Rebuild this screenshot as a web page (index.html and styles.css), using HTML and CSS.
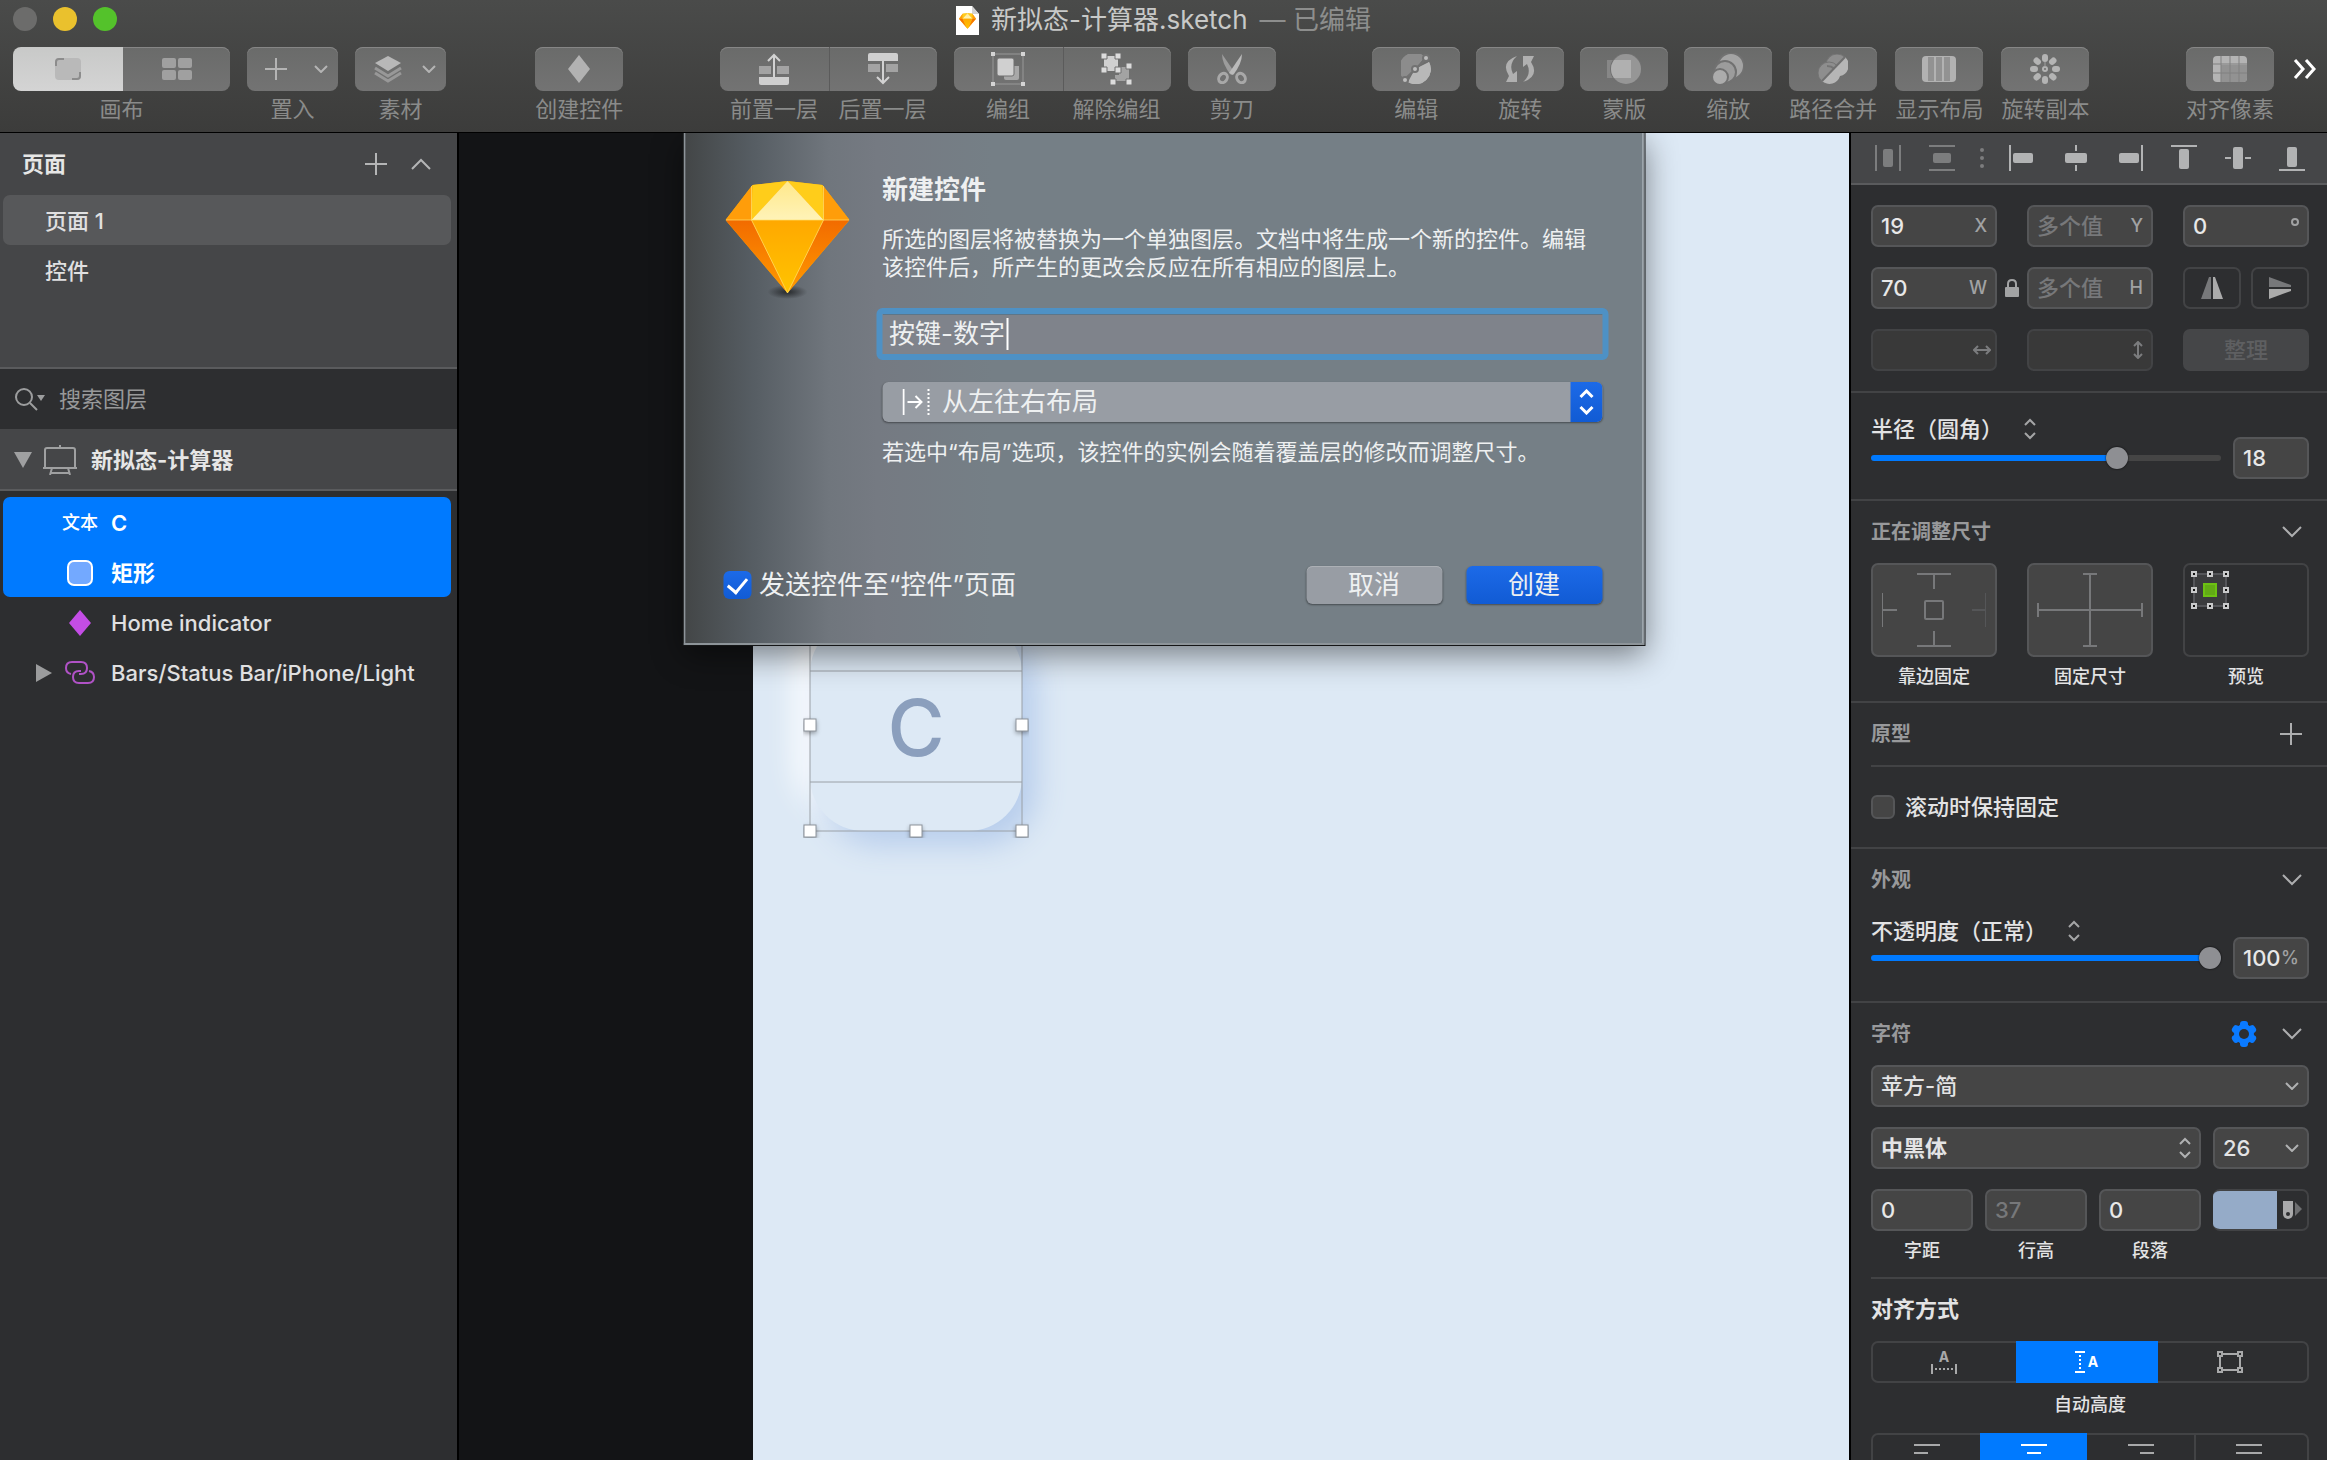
FILE: index.html
```html
<!DOCTYPE html>
<html lang="zh-CN">
<head>
<meta charset="utf-8">
<title>新拟态-计算器.sketch</title>
<link rel="stylesheet" href="styles.css">
</head>
<body>
<svg width="0" height="0" class="defs" aria-hidden="true">
  <defs>
    <linearGradient id="gemTop" x1="0" y1="0" x2="0" y2="1"><stop offset="0" stop-color="#ffe88a"/><stop offset="1" stop-color="#fff3b8"/></linearGradient>
    <linearGradient id="gemMid" x1="0" y1="0" x2="0" y2="1"><stop offset="0" stop-color="#ffa800"/><stop offset="1" stop-color="#ffc400"/></linearGradient>
    <linearGradient id="gemSide" x1="0" y1="0" x2="0" y2="1"><stop offset="0" stop-color="#f26b00"/><stop offset="1" stop-color="#ff9a00"/></linearGradient>
    <symbol id="gem" viewBox="0 0 124 112">
      <path d="M27 4 62 0 97 4 124 39 62 112 0 39Z" fill="#fdad00"/>
      <path d="M27 4 0 39H26Z" fill="#ff9d0a"/><path d="M97 4 124 39H98Z" fill="#ff9d0a"/>
      <path d="M27 4 62 0 26 39Z" fill="#ffcd1a"/><path d="M97 4 62 0 98 39Z" fill="#ffcd1a"/>
      <path d="M62 0 98 39H26Z" fill="url(#gemTop)"/>
      <path d="M0 39H26L62 112Z" fill="url(#gemSide)"/><path d="M124 39H98L62 112Z" fill="url(#gemSide)"/>
      <path d="M26 39H98L62 112Z" fill="url(#gemMid)"/>
      <path d="M0 39H124M26 5V39M98 5V39M26 39 62 112 98 39" fill="none" stroke="#ffe36e" stroke-width="1" opacity=".7"/>
    </symbol>
    <symbol id="down" viewBox="0 0 20 12"><path d="M1 1 10 10 19 1" fill="none" stroke="currentColor" stroke-width="2"/></symbol>
    <symbol id="tipdown" viewBox="0 0 14 8"><path d="M1 1 7 7 13 1" fill="none" stroke="currentColor" stroke-width="2"/></symbol>
    <symbol id="updown" viewBox="0 0 12 22"><path d="M1 7 6 2 11 7M1 15 6 20 11 15" fill="none" stroke="currentColor" stroke-width="2"/></symbol>
    <symbol id="plus" viewBox="0 0 22 22"><path d="M11 0V22M0 11H22" stroke="currentColor" stroke-width="2"/></symbol>
  </defs>
</svg>

<div class="app">
  <header class="titlebar">
    <div class="title-row">
      <div class="lights"><button class="light off" aria-label="关闭"></button><button class="light min" aria-label="最小化"></button><button class="light max" aria-label="缩放窗口"></button></div>
      <div class="doc-title">
        <svg class="doc-icon" viewBox="0 0 23 29"><path d="M0 0H16L23 8V29H0Z" fill="#fff"/><path d="M16 0 23 8H16Z" fill="#d2d2d2"/><use href="#gem" x="3" y="7" width="17" height="16"/></svg>
        <h1 class="doc-name">新拟态-计算器.sketch</h1><span class="doc-state">— 已编辑</span>
      </div>
    </div>
    <nav class="toolbar" aria-label="工具栏">
      <div class="cluster">
        <div class="tool">
          <div class="pair">
            <button class="tb on" aria-label="画布"><svg width="30" height="30" viewBox="0 0 30 30"><rect x="2" y="4" width="26" height="22" rx="4" fill="#b9b9b9"/><path d="M3 12V8Q3 5 6 5H11M27 18V22Q27 25 24 25H19" fill="none" stroke="#8c8c8c" stroke-width="2"/></svg></button>
            <button class="tb" aria-label="组件"><svg width="30" height="30" viewBox="0 0 30 30" fill="#a0a0a0"><rect y="4" width="14" height="10" rx="2"/><rect x="16" y="4" width="14" height="10" rx="2"/><rect y="16" width="14" height="10" rx="2"/><rect x="16" y="16" width="14" height="10" rx="2"/></svg></button>
          </div>
          <span class="tlabel">画布</span>
        </div>
        <div class="tool"><button class="tb menu" aria-label="置入"><svg width="22" height="22"><use href="#plus"/></svg><svg width="14" height="8" class="caret"><use href="#tipdown"/></svg></button><span class="tlabel">置入</span></div>
        <div class="tool"><button class="tb menu" aria-label="素材"><svg width="30" height="28" viewBox="0 0 30 28"><path d="M15 1 28 8 15 16 2 8Z" fill="#b8b8b8"/><path d="M2 13 15 21 28 13M2 18 15 26 28 18" fill="none" stroke="#989898" stroke-width="3"/></svg><svg width="14" height="8" class="caret"><use href="#tipdown"/></svg></button><span class="tlabel">素材</span></div>
      </div>
      <i class="space first"></i>
      <div class="tool"><button class="tb solo" aria-label="创建控件"><svg width="30" height="30" viewBox="0 0 30 30"><path d="M15 1 26 15 15 29 4 15Z" fill="#b2b2b2"/></svg></button><span class="tlabel">创建控件</span></div>
      <i class="space"></i>
      <div class="cluster">
        <div class="tool">
          <div class="pair split">
            <button class="tb" aria-label="前置一层"><svg width="30" height="32" viewBox="0 0 30 32"><path d="M0 24H30V30Q30 32 28 32H2Q0 32 0 30Z" fill="#cfcfcf"/><path d="M0 13H12V21H0ZM18 13H30V21H18Z" fill="#a3a3a3"/><path d="M15 24V2M9 8 15 2 21 8" fill="none" stroke="#d2d2d2" stroke-width="2"/></svg></button>
            <button class="tb" aria-label="后置一层"><svg width="30" height="32" viewBox="0 0 30 32"><path d="M0 8H30V2Q30 0 28 0H2Q0 0 0 2Z" fill="#cfcfcf"/><path d="M0 11H12V19H0ZM18 11H30V19H18Z" fill="#a3a3a3"/><path d="M15 8V30M9 24 15 30 21 24" fill="none" stroke="#d2d2d2" stroke-width="2"/></svg></button>
          </div>
          <div class="tlabels"><span class="tlabel">前置一层</span><span class="tlabel">后置一层</span></div>
        </div>
        <div class="tool">
          <div class="pair split">
            <button class="tb" aria-label="编组"><svg width="34" height="34" viewBox="0 0 34 34"><path d="M2 2H32V32H2Z" fill="none" stroke="#989898"/><path d="M0 0H4V4H0ZM30 0H34V4H30ZM0 30H4V34H0ZM30 30H34V34H30Z" fill="#d4d4d4"/><path d="M13 14H28V26Q28 28 26 28H15Q13 28 13 26Z" fill="#a8a8a8"/><rect x="6" y="6" width="17" height="18" rx="2" fill="#d0d0d0" stroke="#707070" stroke-width="1"/></svg></button>
            <button class="tb" aria-label="解除编组"><svg width="32" height="32" viewBox="0 0 32 32"><path d="M18 14H28V28H14V22H18Z" fill="#a3a3a3"/><path d="M3 3H17V18H3Z" fill="#d0d0d0"/><path d="M0 0H6V6H0ZM14 0H20V6H14ZM0 14H6V20H0ZM14 14H20V20H14ZM25 10H31V16H25ZM9 26H15V32H9ZM25 26H31V32H25Z" fill="#dcdcdc" stroke="#707070"/></svg></button>
          </div>
          <div class="tlabels"><span class="tlabel">编组</span><span class="tlabel">解除编组</span></div>
        </div>
        <div class="tool"><button class="tb solo" aria-label="剪刀"><svg width="30" height="30" viewBox="0 0 30 30"><path d="M5 0 18 19 14 21Q5 10 5 0Z" fill="#9c9c9c"/><path d="M25 0 12 19 16 21Q25 10 25 0Z" fill="#bababa"/><ellipse cx="6" cy="24" rx="4" ry="5" transform="rotate(35 6 24)" fill="none" stroke="#a8a8a8" stroke-width="3"/><ellipse cx="24" cy="24" rx="4" ry="5" transform="rotate(-35 24 24)" fill="none" stroke="#a8a8a8" stroke-width="3"/></svg></button><span class="tlabel">剪刀</span></div>
      </div>
      <i class="space"></i>
      <div class="cluster">
        <div class="cluster tight">
          <div class="tool"><button class="tb solo" aria-label="编辑"><svg width="30" height="30" viewBox="0 0 30 30"><path d="M3 25A15 15 0 0 1 24 3Z" fill="#8c8c8c"/><path d="M28 8A15 15 0 0 1 7 28Z" fill="#b8b8b8"/><path d="M3 25A15 15 0 0 1 24 3L14 15ZM3 25Z" fill="#8c8c8c"/><path d="M28 8A15 15 0 0 1 7 28L14 15Z" fill="#b8b8b8"/><path d="M3 26 25 5" stroke="#727272" stroke-width="2"/><g fill="#bdbdbd" stroke="#727272" stroke-width="2"><circle cx="14" cy="15" r="3"/><circle cx="25" cy="4" r="3"/><circle cx="4" cy="26" r="3"/></g></svg></button><span class="tlabel">编辑</span></div>
          <div class="tool"><button class="tb solo" aria-label="旋转"><svg width="30" height="30" viewBox="0 0 30 30"><path d="M12 2Q-5 8 4 22L1 28H12V17L8 20Q3 10 12 2Z" fill="#b0b0b0"/><path d="M18 28Q35 22 26 8L29 2H18V13L22 10Q27 20 18 28Z" fill="#b0b0b0"/></svg></button><span class="tlabel">旋转</span></div>
          <div class="tool"><button class="tb solo" aria-label="蒙版"><svg width="34" height="30" viewBox="0 0 34 30"><rect y="6" width="24" height="18" fill="#878787"/><circle cx="19" cy="15" r="16" fill="#727272"/><circle cx="19" cy="15" r="15" fill="#969696"/><path d="M24 6V24H7Q1 15 7 6Z" fill="#b0b0b0"/></svg></button><span class="tlabel">蒙版</span></div>
          <div class="tool"><button class="tb solo" aria-label="缩放"><svg width="32" height="32" viewBox="-1 -1 32 32" stroke="#717171" stroke-width="2"><circle cx="18" cy="12" r="13" fill="#a4a4a4"/><circle cx="12" cy="18" r="11" fill="#9c9c9c"/><circle cx="7" cy="23" r="8" fill="#acacac"/></svg></button><span class="tlabel">缩放</span></div>
        </div>
        <div class="cluster loose">
          <div class="tool"><button class="tb solo" aria-label="路径合并"><svg width="30" height="30" viewBox="0 0 30 30"><g fill="#8e8e8e" stroke="#747474"><circle cx="19" cy="11" r="11"/><circle cx="11" cy="19" r="11"/><path d="M9 12Q18 12 18 21" fill="none" stroke-width="2"/></g><path d="M27 3A11 11 0 0 1 22 22A11 11 0 0 1 4 27Z" fill="#b6b6b6"/><path d="M4 27 27 3" stroke="#707070" stroke-width="2"/></svg></button><span class="tlabel">路径合并</span></div>
          <div class="tool"><button class="tb solo" aria-label="显示布局"><svg width="34" height="26" viewBox="0 0 34 26"><rect width="34" height="26" rx="4" fill="#b2b2b2"/><path d="M6 1H12V25H6ZM14 1H20V25H14ZM22 1H28V25H22Z" fill="#929292"/></svg></button><span class="tlabel">显示布局</span></div>
          <div class="tool"><button class="tb solo" aria-label="旋转副本"><svg width="30" height="30" viewBox="0 0 30 30"><g fill="#b4b4b4"><rect x="12" y="0" width="6" height="8" rx="3"/><rect x="12" y="22" width="6" height="8" rx="3"/><rect x="0" y="12" width="8" height="6" rx="3"/><rect x="22" y="12" width="8" height="6" rx="3"/><g transform="rotate(45 15 15)"><rect x="12" y="0" width="6" height="8" rx="3"/><rect x="12" y="22" width="6" height="8" rx="3"/><rect x="0" y="12" width="8" height="6" rx="3"/><rect x="22" y="12" width="8" height="6" rx="3"/></g></g><circle cx="15" cy="15" r="2" fill="none" stroke="#b4b4b4" stroke-width="2"/><path d="M15 8V13" stroke="#a0a0a0"/></svg></button><span class="tlabel">旋转副本</span></div>
        </div>
      </div>
      <i class="space"></i>
      <div class="tool"><button class="tb solo" aria-label="对齐像素"><svg width="34" height="26" viewBox="0 0 34 26"><rect width="34" height="26" rx="4" fill="#b4b4b4"/><path d="M8 9H34V22Q34 26 30 26H8Z" fill="#929292"/><path d="M8 0V26M17 0V26M26 0V26M0 8H34M0 17H34" stroke="#808080" stroke-width="1"/></svg></button><span class="tlabel">对齐像素</span></div>
      <button class="more" aria-label="更多工具"><svg width="24" height="20" viewBox="0 0 24 20"><path d="M2 1 10 10 2 19M13 1 21 10 13 19" fill="none" stroke="#fff" stroke-width="3"/></svg></button>
    </nav>
  </header>

  <main class="work">
    <aside class="sidebar">
      <section class="pages">
        <div class="pages-head"><h2>页面</h2><button class="ghost" aria-label="添加页面"><svg width="22" height="22"><use href="#plus"/></svg></button><button class="ghost" aria-label="收起页面"><svg width="20" height="12" viewBox="0 0 20 12"><path d="M1 11 10 2 19 11" fill="none" stroke="currentColor" stroke-width="2"/></svg></button></div>
        <button class="page current">页面 1</button>
        <button class="page">控件</button>
      </section>
      <label class="search"><svg width="32" height="24" viewBox="0 0 32 24"><circle cx="10" cy="10" r="8" fill="none" stroke="currentColor" stroke-width="2"/><path d="M16 16 23 23" stroke="currentColor" stroke-width="2"/><path d="M23 8H31L27 14Z" fill="currentColor"/></svg><input type="text" placeholder="搜索图层" aria-label="搜索图层"></label>
      <button class="artboard-row"><svg width="20" height="18" viewBox="0 0 20 18"><path d="M1 1H19L10 17Z" fill="currentColor"/></svg><svg width="34" height="30" viewBox="0 0 34 30" fill="none" stroke="currentColor" stroke-width="2"><path d="M2 23V5Q2 3 4 3H30Q32 3 32 5V23M0 23H34M17 0V3M9 23 7 30M25 23 27 30M8 28H26"/></svg><span>新拟态-计算器</span></button>
      <div class="layers">
        <div class="selected">
          <button class="layer"><span class="kind">文本</span><span class="strong">C</span></button>
          <button class="layer"><span class="kind"><svg width="26" height="26" viewBox="0 0 26 26"><rect x="1" y="1" width="24" height="24" rx="6" fill="#73a9ff" stroke="#fff" stroke-width="2"/></svg></span><span class="strong">矩形</span></button>
        </div>
        <button class="layer"><span class="kind"><svg width="22" height="26" viewBox="0 0 22 26"><path d="M11 0 22 13 11 26 0 13Z" fill="#c44de6"/></svg></span><span>Home indicator</span></button>
        <button class="layer nested"><svg width="16" height="18" viewBox="0 0 16 18"><path d="M0 0 16 9 0 18Z" fill="#9b9c9d"/></svg><span class="kind"><svg width="30" height="24" viewBox="0 0 30 24" fill="none" stroke="#b052c6" stroke-width="2"><path d="M6 13Q1 12 1 7Q1 1 7 1H16Q22 1 22 7Q22 13 16 13H14"/><path d="M24 10Q29 11 29 16Q29 22 23 22H14Q8 22 8 16Q8 10 14 10H16"/></svg></span><span>Bars/Status Bar/iPhone/Light</span></button>
      </div>
    </aside>

    <section class="canvas" aria-label="画布">
      <div class="artboard">
        <div class="key">C</div>
        <svg class="selection" width="226" height="226" viewBox="0 0 226 226">
          <path d="M7 7H219V219H7ZM7 59H219M7 170H219" fill="none" stroke="#9aa0a6" stroke-width="1"/>
          <g class="handles" fill="#fff" stroke="#8d949c"><rect x="1" y="107" width="12" height="12"/><rect x="213" y="107" width="12" height="12"/><rect x="1" y="213" width="12" height="12"/><rect x="107" y="213" width="12" height="12"/><rect x="213" y="213" width="12" height="12"/></g>
        </svg>
      </div>
    </section>

    <aside class="inspector">
      <div class="align">
        <button class="dim" aria-label="水平分布"><svg width="26" height="26" fill="currentColor"><path d="M0 0H2V26H0ZM24 0H26V26H24Z"/><rect x="8" y="4" width="10" height="18" rx="2"/></svg></button>
        <button class="dim" aria-label="垂直分布"><svg width="26" height="26" fill="currentColor"><path d="M0 0H26V2H0ZM0 24H26V26H0Z"/><rect x="4" y="8" width="18" height="10" rx="2"/></svg></button>
        <svg class="dots" width="26" height="26" fill="currentColor"><circle cx="13" cy="5" r="2"/><circle cx="13" cy="13" r="2"/><circle cx="13" cy="21" r="2"/></svg>
        <button aria-label="左对齐"><svg width="26" height="26" fill="currentColor"><path d="M0 0H2V26H0Z"/><rect x="4" y="8" width="20" height="10" rx="2"/></svg></button>
        <button aria-label="水平居中"><svg width="26" height="26" fill="currentColor"><path d="M12 0H14V6H12ZM12 20H14V26H12Z"/><rect x="2" y="8" width="22" height="10" rx="2"/></svg></button>
        <button aria-label="右对齐"><svg width="26" height="26" fill="currentColor"><path d="M24 0H26V26H24Z"/><rect x="2" y="8" width="20" height="10" rx="2"/></svg></button>
        <button aria-label="顶对齐"><svg width="26" height="26" fill="currentColor"><path d="M0 0H26V2H0Z"/><rect x="8" y="4" width="10" height="20" rx="2"/></svg></button>
        <button aria-label="垂直居中"><svg width="26" height="26" fill="currentColor"><path d="M0 12H6V14H0ZM20 12H26V14H20Z"/><rect x="8" y="2" width="10" height="22" rx="2"/></svg></button>
        <button aria-label="底对齐"><svg width="26" height="26" fill="currentColor"><path d="M0 24H26V26H0Z"/><rect x="8" y="2" width="10" height="20" rx="2"/></svg></button>
      </div>

      <section class="block geometry">
        <label class="field c1"><input type="text" value="19"><span class="unit">X</span></label>
        <label class="field c3"><input type="text" placeholder="多个值"><span class="unit">Y</span></label>
        <label class="field c5"><input type="text" value="0" aria-label="角度"><svg class="degree" width="8" height="8" viewBox="0 0 8 8"><circle cx="4" cy="4" r="3" fill="none" stroke="currentColor" stroke-width="2"/></svg></label>
        <label class="field c1"><input type="text" value="70"><span class="unit">W</span></label>
        <button class="lock" aria-label="锁定比例"><svg width="14" height="20" viewBox="0 0 14 20"><rect y="9" width="14" height="10" rx="1" fill="currentColor"/><path d="M3 10V6Q3 2 7 2T11 6V10" fill="none" stroke="currentColor" stroke-width="2"/></svg></button>
        <label class="field c3"><input type="text" placeholder="多个值"><span class="unit">H</span></label>
        <div class="flips c5">
          <button class="outline" aria-label="水平翻转"><svg width="22" height="22"><path d="M8 0H10V22H0Z" fill="#77787a"/><path d="M12 0H14L22 22H12Z" fill="#ababab"/></svg></button>
          <button class="outline" aria-label="垂直翻转"><svg width="22" height="22"><path d="M0 0 22 8V10H0Z" fill="#77787a"/><path d="M0 22 22 14V12H0Z" fill="#ababab"/></svg></button>
        </div>
        <label class="field empty c1"><input type="text" disabled aria-label="水平间距"><svg width="18" height="10" viewBox="0 0 18 10"><path d="M1 5H17M5 1 1 5 5 9M13 1 17 5 13 9" fill="none" stroke="currentColor" stroke-width="2"/></svg></label>
        <label class="field empty c3"><input type="text" disabled aria-label="垂直间距"><svg width="18" height="18" viewBox="-4 0 18 18"><path d="M5 1V17M1 5 5 1 9 5M1 13 5 17 9 13" fill="none" stroke="currentColor" stroke-width="2"/></svg></label>
        <button class="tidy c5" disabled>整理</button>
      </section>

      <section class="block slider-block radius">
        <div class="slider-col"><button class="mode">半径（圆角）<svg width="12" height="22"><use href="#updown"/></svg></button><input class="r70" type="range" min="0" max="1000" value="717" aria-label="半径"></div>
        <label class="field small"><input type="text" value="18" aria-label="半径数值"></label>
      </section>

      <section class="block">
        <div class="head"><h2>正在调整尺寸</h2><button class="ghost" aria-label="收起"><svg width="20" height="12"><use href="#down"/></svg></button></div>
        <div class="previews">
          <figure><div class="pin"><svg width="104" height="74" viewBox="0 0 104 74" fill="none" stroke="#77787a" stroke-width="2"><path d="M35 1H69M52 1V16M35 73H69M52 73V58M0 20V54M0 37H15"/><path d="M104 20V54M104 37H90" stroke="#555658"/><rect x="43" y="28" width="18" height="18" rx="1"/></svg></div><figcaption>靠边固定</figcaption></figure>
          <figure><div class="pin"><svg width="106" height="74" viewBox="0 0 106 74" fill="none" stroke="#77787a" stroke-width="2"><path d="M46 1H60M53 1V73M46 73H60M1 37H105M1 30V44M105 30V44"/></svg></div><figcaption>固定尺寸</figcaption></figure>
          <figure><div class="pin hollow"><svg width="38" height="38" viewBox="0 0 38 38"><path d="M3 3H35V35H3Z" fill="#3b3c3e" stroke="#55565a" stroke-width="2"/><rect x="12" y="12" width="14" height="14" fill="#62aa16"/><path d="M13 13H25V25H13Z" fill="none" stroke="#6cc112" stroke-width="2"/><g fill="#111" stroke="#c9cacb" stroke-width="2"><path d="M1 1H5V5H1ZM17 1H21V5H17ZM33 1H37V5H33ZM1 17H5V21H1ZM33 17H37V21H33ZM1 33H5V37H1ZM17 33H21V37H17ZM33 33H37V37H33Z"/></g></svg></div><figcaption>预览</figcaption></figure>
        </div>
      </section>

      <section class="block">
        <div class="head"><h2>原型</h2><button class="ghost" aria-label="添加"><svg width="22" height="22"><use href="#plus"/></svg></button></div>
        <label class="fix"><input type="checkbox"><span>滚动时保持固定</span></label>
      </section>

      <section class="block">
        <div class="head"><h2>外观</h2><button class="ghost" aria-label="收起"><svg width="20" height="12"><use href="#down"/></svg></button></div>
        <div class="slider-block opacity">
          <div class="slider-col"><button class="mode">不透明度（正常）<svg width="12" height="22"><use href="#updown"/></svg></button><input class="r100" type="range" min="0" max="100" value="100" aria-label="不透明度"></div>
          <label class="field small percent"><input type="text" value="100" aria-label="不透明度数值"><span class="unit">%</span></label>
        </div>
      </section>

      <section class="block type">
        <div class="head"><h2>字符</h2><button class="ghost gear" aria-label="文本选项"><svg width="26" height="26" viewBox="-13 -13 26 26"><g fill="#0a7aff"><circle r="10"/><rect x="-4" y="-13" width="8" height="26" rx="3"/><rect x="-4" y="-13" width="8" height="26" rx="3" transform="rotate(60)"/><rect x="-4" y="-13" width="8" height="26" rx="3" transform="rotate(120)"/></g><circle r="5" fill="#2d2e30"/></svg></button><button class="ghost" aria-label="收起"><svg width="20" height="12"><use href="#down"/></svg></button></div>
        <div class="type-grid">
          <div class="picker family"><select aria-label="字体"><option>苹方-简</option></select><svg width="14" height="8" class="tip"><use href="#tipdown"/></svg></div>
          <div class="picker weight"><select aria-label="字重"><option>中黑体</option></select><svg width="12" height="22" class="tip"><use href="#updown"/></svg></div>
          <div class="picker family-size"><select aria-label="字号"><option>26</option></select><svg width="14" height="8" class="tip"><use href="#tipdown"/></svg></div>
          <label class="metric"><span class="field"><input type="text" value="0"></span><span class="cap">字距</span></label>
          <label class="metric"><span class="field"><input type="text" placeholder="37"></span><span class="cap">行高</span></label>
          <label class="metric"><span class="field"><input type="text" value="0"></span><span class="cap">段落</span></label>
          <button class="swatch" aria-label="文本颜色"><i></i><svg width="20" height="20" viewBox="0 0 20 20"><path d="M0 1H10V14A5 5 0 0 1 0 14Z" fill="#a9a9aa"/><circle cx="5" cy="14" r="2" fill="#2d2e30"/><path d="M12 2 19 9 12 16Z" fill="#6e6f71"/></svg></button>
        </div>
        <div class="alignment">
          <h3>对齐方式</h3>
          <div class="seg three">
            <button aria-label="自动宽度"><svg width="26" height="30" viewBox="0 -4 26 30"><text x="13" y="11" text-anchor="middle" class="glyph">A</text><path d="M1 13V23M25 13V23" stroke="currentColor" stroke-width="2"/><path d="M4 18H23" stroke="currentColor" stroke-width="2" stroke-dasharray="2 2"/></svg></button>
            <button class="on" aria-label="自动高度"><svg width="24" height="24" viewBox="0 0 24 24"><text x="18" y="17" text-anchor="middle" class="glyph">A</text><path d="M0 2H10M0 22H10" stroke="currentColor" stroke-width="2"/><path d="M5 5V21" stroke="currentColor" stroke-width="2" stroke-dasharray="2 2"/></svg></button>
            <button aria-label="固定尺寸"><svg width="26" height="22" viewBox="0 0 26 22" fill="none" stroke="currentColor" stroke-width="2"><path d="M3 5V17M23 5V17M5 3H21M5 19H21M1 1H5V5H1ZM21 1H25V5H21ZM1 17H5V21H1ZM21 17H25V21H21Z"/></svg></button>
          </div>
          <span class="cap mode-name">自动高度</span>
          <div class="seg four">
            <button aria-label="文本左对齐"><svg width="26" height="20"><path d="M0 1H26M0 9H14M0 17H26" stroke="currentColor" stroke-width="2"/></svg></button>
            <button class="on" aria-label="文本居中"><svg width="26" height="20"><path d="M0 1H26M6 9H20M0 17H26" stroke="currentColor" stroke-width="2"/></svg></button>
            <button aria-label="文本右对齐"><svg width="26" height="20"><path d="M0 1H26M12 9H26M0 17H26" stroke="currentColor" stroke-width="2"/></svg></button>
            <button class="last" aria-label="两端对齐"><svg width="26" height="20"><path d="M0 1H26M0 9H26M0 17H26" stroke="currentColor" stroke-width="2"/></svg></button>
          </div>
        </div>
      </section>
    </aside>

    <form class="sheet" role="dialog" aria-labelledby="sheet-title">
      <div class="sheet-main">
        <svg class="sheet-gem" width="124" height="122" viewBox="0 0 124 122"><defs><radialGradient id="sh"><stop offset="0" stop-color="#000" stop-opacity=".6"/><stop offset="1" stop-color="#000" stop-opacity="0"/></radialGradient></defs><ellipse cx="62" cy="111" rx="20" ry="7" fill="url(#sh)"/><use href="#gem" width="124" height="112"/></svg>
        <div class="sheet-body">
          <h2 id="sheet-title">新建控件</h2>
          <p>所选的图层将被替换为一个单独图层。文档中将生成一个新的控件。编辑该控件后，所产生的更改会反应在所有相应的图层上。</p>
          <div class="name-box"><input type="text" value="按键-数字" aria-label="控件名称"><i class="cursor"></i></div>
          <div class="layout-box"><svg class="layout-icon" width="28" height="26" viewBox="0 0 28 26" fill="none" stroke="#fff" stroke-width="2"><path d="M1 0V26M5 13H19M13 7 19 13 13 19"/><path d="M26 0V26" stroke-dasharray="2 2"/></svg><select aria-label="布局"><option>从左往右布局</option></select><span class="stepper"><svg width="16" height="26" viewBox="0 0 16 26"><path d="M2 8 8 2 14 8M2 18 8 24 14 18" fill="none" stroke="#fff" stroke-width="3"/></svg></span></div>
          <p class="hint">若选中“布局”选项，该控件的实例会随着覆盖层的修改而调整尺寸。</p>
        </div>
      </div>
      <div class="sheet-foot">
        <label class="send"><input type="checkbox" checked><span>发送控件至“控件”页面</span></label>
        <button type="button" class="btn">取消</button><button type="button" class="btn primary">创建</button>
      </div>
    </form>
  </main>
</div>
</body>
</html>
```
FILE: styles.css
```css
* { box-sizing: border-box; }
html, body { height: 100%; margin: 0; }
body {
  font: 500 22px/30px Inter, "Noto Sans CJK SC", sans-serif;
  color: #e3e3e4;
  background: #131416;
  overflow: hidden;
}
h1, h2, h3, p, figure { margin: 0; }
button, input, select { font: inherit; color: inherit; }
button { padding: 0; border: 0; background: none; display: flex; align-items: center; justify-content: center; }
input, select { border: 0; background: none; outline: 0; padding: 0; min-width: 0; width: 100%; appearance: none; }
svg { display: block; flex: none; }
.defs { position: absolute; }
.app { height: 100%; display: flex; flex-direction: column; }

/* title bar and toolbar */
.titlebar { flex: none; height: 133px; background: linear-gradient(#4a4b4a, #3c3c3b); border-bottom: 1px solid #000; }
.title-row { height: 47px; padding: 7px 13px; display: flex; align-items: flex-start; justify-content: center; }
.lights { display: flex; gap: 16px; flex: 1; }
.title-row::after { content: ""; flex: 1; }
.light { width: 24px; height: 24px; border-radius: 50%; }
.off { background: #6c6c6b; }
.min { background: #eac12d; }
.max { background: #54c22b; }
.doc-title { display: flex; align-items: center; gap: 12px; height: 26px; font-size: 26px; font-weight: 400; color: #c8c9c8; }
.doc-icon { width: 23px; height: 29px; }
.doc-name { font: inherit; }
.doc-state { color: #8d8e8d; }
.toolbar { display: flex; align-items: flex-start; padding: 0 8px 0 13px; }
.cluster { display: flex; gap: 17px; }
.tight { gap: 16px; }
.loose { gap: 18px; }
.space { flex: 13 1 0; }
.space.first { flex-grow: 12; }
.tool { display: flex; flex-direction: column; align-items: center; gap: 2px; }
.tlabel { font-weight: 400; color: #8a8b8a; line-height: 32px; text-align: center; white-space: nowrap; }
.tlabels { display: flex; width: 100%; }
.tlabels .tlabel { flex: 1; }
.tb { height: 44px; background: linear-gradient(#6a6b6a, #737373); border-radius: 8px; box-shadow: inset 0 1px #868686; color: #b4b4b4; }
.pair { display: flex; }
.pair .tb:first-child { width: 110px; border-radius: 8px 0 0 8px; }
.pair .tb:last-child { width: 107px; border-radius: 0 8px 8px 0; }
.split .tb:first-child { border-right: 1px solid #5b5b5b; }
.tb.on { background: linear-gradient(#c8c9c8, #d4d4d4); box-shadow: none; }
.solo { width: 88px; }
.menu { width: 91px; justify-content: space-between; padding: 0 10px 0 18px; }
.more { width: 28px; height: 44px; margin-left: 17px; }

/* work area */
.work { flex: 1; min-height: 0; position: relative; display: grid; grid-template-columns: 459px 1fr 478px; }
.sidebar { border-right: 2px solid #000; background: #2d2e30; color: #e0e0e1; overflow: hidden; }
.pages { background: #454648; height: 236px; border-bottom: 2px solid #5a5b5d; }
.pages-head { height: 62px; display: flex; align-items: center; gap: 24px; padding: 0 26px 0 22px; color: #b4b5b6; }
.pages-head h2 { flex: 1; font-size: 22px; font-weight: 700; color: #e6e6e6; }
.page { width: 448px; height: 50px; margin-left: 3px; padding: 2px 0 0 42px; justify-content: flex-start; border-radius: 7px; }
.page.current { background: #57585a; }
.search { display: flex; align-items: center; height: 60px; padding-left: 14px; gap: 13px; color: #9c9d9e; }
.search input { flex: 1; font-weight: 400; }
.search input::placeholder { color: #98999a; opacity: 1; }
.artboard-row { width: 100%; height: 62px; padding: 2px 0 0 13px; gap: 10px; justify-content: flex-start; background: #454648; border-bottom: 2px solid #5a5b5d; color: #9fa0a1; }
.artboard-row span { margin-left: 4px; font-weight: 700; color: #e6e6e6; }
.layers { padding: 6px 6px 0 3px; }
.selected { background: #007aff; border-radius: 7px; color: #fff; }
.strong { font-weight: 600; }
.layer { width: 100%; height: 50px; padding: 2px 0 0 59px; gap: 13px; justify-content: flex-start; white-space: nowrap; }
.layer.nested { padding-left: 33px; gap: 10px; }
.layer.nested .kind { margin-right: 3px; }
.kind { width: 36px; flex: none; display: flex; justify-content: center; font-size: 18px; }

/* canvas: free placement of the artboard and its layers */
.canvas { position: relative; background: #131416; overflow: hidden; }
.artboard { position: absolute; inset: 0 0 0 294px; background: #dde9f5; overflow: hidden; }
.key { position: absolute; left: 57px; top: 486px; width: 212px; height: 212px; padding-top: 6px; border-radius: 54px; display: flex; align-items: center; justify-content: center; font-size: 78px; font-weight: 500; color: #8b9fbd; background: #dde9f5; box-shadow: 14px 14px 30px #b7cdec, -14px -14px 30px #fff; }
.selection { position: absolute; left: 50px; top: 479px; }
.handles { filter: drop-shadow(0 2px 2px #0005); }

/* inspector */
.inspector { border-left: 2px solid #000; background: #2d2e30; overflow: hidden; }
.align { height: 52px; display: flex; align-items: center; padding: 0 8px 0 10px; background: #454648; border-bottom: 2px solid #5a5b5d; color: #b2b3b4; }
.align button { flex: 1; }
.align .dim, .dots { color: #7c7d7e; }
.block { border-bottom: 2px solid #424345; padding: 0 18px 0 20px; }
.geometry { display: grid; grid-template-columns: 1fr 30px 1fr 30px 1fr; row-gap: 20px; padding: 20px 18px 20px 20px; }
.c1 { grid-column: 1; } .c3 { grid-column: 3; } .c5 { grid-column: 5; }
.field { height: 42px; display: flex; align-items: center; padding: 0 8px; background: #454545; border: 2px solid #555658; border-radius: 7px; color: #e8e8e8; }
.field input::placeholder { color: #77787a; opacity: 1; }
.unit { font-size: 18px; color: #a1a2a3; }
.degree { color: #a1a2a3; margin: 0 0 8px; }
.empty { background: #393939; border-color: #424345; color: #7b7c7e; padding-right: 4px; }
.lock { color: #a2a3a4; grid-column: 2; }
.flips { display: flex; gap: 10px; }
.outline { flex: 1; border: 2px solid #424345; border-radius: 7px; }
.tidy { background: #454648; border-radius: 7px; color: #5e5f61; }
.slider-block { display: flex; gap: 12px; }
.radius { padding-top: 20px; padding-bottom: 20px; align-items: flex-end; height: 108px; }
.opacity { align-items: flex-end; padding-bottom: 22px; height: 90px; }
.slider-col { flex: 1; display: flex; flex-direction: column; height: 67px; padding-bottom: 10px; justify-content: space-between; }
.opacity .slider-col { height: 65px; }
.mode { align-self: flex-start; gap: 21px; height: 34px; color: #e3e3e4; }
.mode svg { color: #a4a5a6; }
.small { width: 76px; }
.percent { padding-right: 8px; }
.percent input { width: 40px; }
.percent .unit { flex: none; color: #a1a2a3; font-size: 18px; }
input[type=range] { height: 22px; margin: 0; }
input[type=range]::-webkit-slider-runnable-track { height: 6px; border-radius: 3px; background: linear-gradient(90deg, #007aff 70%, #454545 70%); }
.r100::-webkit-slider-runnable-track { background: #007aff !important; }
input[type=range]::-webkit-slider-thumb { appearance: none; width: 22px; height: 22px; margin-top: -8px; border-radius: 50%; background: #8e8f93; box-shadow: 0 0 2px #000; }
.head { height: 62px; display: flex; align-items: center; gap: 25px; padding-right: 7px; color: #adaeaf; }
.head h2 { flex: 1; font-size: 20px; font-weight: 600; color: #98999b; }
.previews { display: grid; grid-template-columns: repeat(3, 1fr); gap: 30px; padding-bottom: 4px; }
.pin { height: 94px; display: flex; align-items: center; justify-content: center; background: #454545; border: 2px solid #555658; border-radius: 7px; }
.hollow { background: none; border-color: #424345; align-items: flex-start; justify-content: flex-start; padding: 6px; }
figcaption, .cap { font-size: 18px; line-height: 40px; text-align: center; display: block; }
.fix { height: 82px; display: flex; align-items: center; gap: 10px; border-top: 2px solid #424345; margin-right: -18px; }
.fix input { width: 24px; height: 24px; margin: 0; background: #454545; border: 2px solid #555658; border-radius: 6px; }
.type { border: 0; }
.type-grid { display: grid; grid-template-columns: 1fr 1fr 1fr 96px; gap: 20px 12px; }
.picker { height: 42px; display: grid; align-items: center; background: #454545; border: 2px solid #555658; border-radius: 7px; padding: 0 8px; }
.picker > * { grid-area: 1 / 1; }
.picker select { height: 38px; }
.tip { justify-self: end; color: #b0b1b2; pointer-events: none; }
.family { grid-column: 1 / -1; }
.weight { grid-column: 1 / 4; font-weight: 700; }
.swatch { height: 42px; border: 2px solid #424345; border-left: 0; border-radius: 7px; overflow: hidden; gap: 6px; justify-content: flex-start; }
.swatch i { width: 64px; height: 42px; background: #95abc8; }
.alignment { margin-right: -18px; padding-right: 18px; border-top: 2px solid #424345; margin-top: 6px; }
.alignment h3 { font-size: 22px; font-weight: 600; line-height: 60px; height: 62px; }
.seg { display: grid; height: 42px; border: 2px solid #424345; border-radius: 7px; padding-right: 6px; color: #a8a9aa; }
.three { grid-template-columns: 1fr 1fr 1fr; }
.four { grid-template-columns: 1fr 1fr 1fr 1fr; }
.mode-name { line-height: 44px; margin-bottom: 6px; }
.seg .on { background: #007aff; color: #fff; margin: -2px 0; }
.last { border-left: 2px solid #424345; }
.glyph { font-size: 14px; font-weight: 700; fill: currentColor; }

/* sheet attached to the title bar */
.sheet { position: absolute; top: 0; left: 50%; transform: translateX(-50%); width: 961px; height: 512px; padding: 40px 40px 39px; display: flex; flex-direction: column; justify-content: space-between; border: 2px solid #8d9499; border-top: 0; outline: 1px solid #151617; clip-path: inset(0 -60px -60px -60px); box-shadow: 0 10px 30px #0007; background: linear-gradient(90deg, #434647, #565d63 7%, #70767d 15%, #757a82 20%, #757f86 32%); color: #eef0f1; }
.sheet-main { display: flex; gap: 33px; }
.sheet-gem { margin-top: 8px; }
.sheet-body { flex: 1; font-weight: 400; }
.sheet h2 { font-size: 26px; font-weight: 700; line-height: 34px; margin-bottom: 18px; }
.sheet p { line-height: 28px; margin-right: -2px; }
.name-box { position: relative; display: flex; height: 52px; margin: 27px -6px 22px; border: 6px solid #4e91c5; border-radius: 6px; background: #7f838b; padding-left: 7px; font-size: 26px; box-shadow: inset 0 1px #5d7689; }
.cursor { position: absolute; left: 124px; top: 4px; width: 2px; height: 32px; background: #fff; }
.layout-box { display: flex; align-items: center; gap: 12px; height: 40px; padding-left: 20px; border-radius: 6px; background: #989da4; box-shadow: 0 1px 2px #0006; overflow: hidden; font-size: 26px; }
.layout-box select { flex: 1; height: 40px; }
.stepper { width: 32px; height: 40px; display: flex; align-items: center; justify-content: center; background: linear-gradient(#1c6ae8, #115bd4); }
.sheet .hint { margin-top: 16px; }
.sheet-foot { display: flex; align-items: center; gap: 24px; font-size: 26px; font-weight: 400; }
.send { flex: 1; display: flex; align-items: center; gap: 8px; margin-left: -2px; }
.send input { width: 28px; height: 28px; margin: 0; border-radius: 6px; background: linear-gradient(#1c6ae8, #115bd4); display: grid; place-items: center; }
.send input::before { content: ""; width: 9px; height: 16px; border: solid #fff; border-width: 0 3px 3px 0; transform: translateY(-2px) rotate(40deg); }
.btn { width: 136px; height: 38px; border-radius: 6px; background: #989da4; box-shadow: inset 0 1px #acb0b5, 0 1px 2px #0006; }
.primary { background: linear-gradient(#1c6ae8, #115bd4); box-shadow: 0 1px 2px #0006; }
```
